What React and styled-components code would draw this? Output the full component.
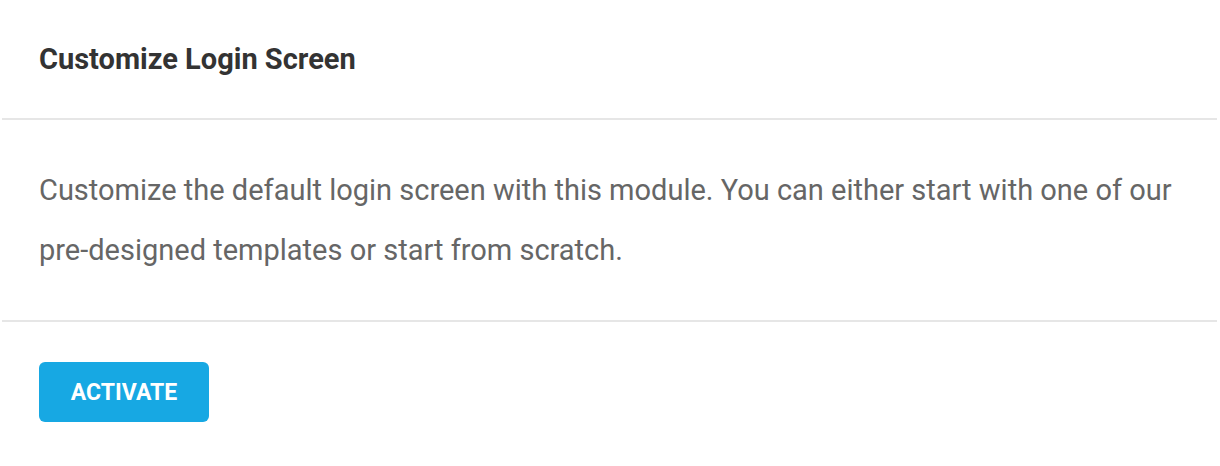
import React from "react";
import styled, { createGlobalStyle } from "styled-components";

const GlobalStyle = createGlobalStyle`
  body {
    margin: 0;
    background: #fff;
    font-family: Roboto, "Liberation Sans", sans-serif;
  }
`;

const ModuleCard = () => {
  return (
    <StyledCard>
      <section className="header">
        <h2>Customize Login Screen</h2>
      </section>
      <section className="body">
        <p>
          Customize the default login screen with this module. You can either
          start with one of our pre-designed templates or start from scratch.
        </p>
      </section>
      <section className="footer">
        <button className="blue-btn">ACTIVATE</button>
      </section>
    </StyledCard>
  );
};

const StyledCard = styled.div`
  margin: 0 3px 0 2px;
  background: #fff;

  section {
    padding: 0 37px;
  }
  .header {
    height: 118px;
    display: flex;
    align-items: center;
    border-bottom: 2px solid #e6e6e6;
  }
  h2 {
    margin: 0;
    font-size: 29px;
    line-height: 36px;
    font-weight: 700;
    color: #333333;
  }
  .body {
    padding-top: 40px;
    padding-bottom: 40px;
    border-bottom: 2px solid #e6e6e6;
  }
  p {
    margin: 0;
    max-width: 1150px;
    font-size: 29px;
    line-height: 60px;
    color: #666666;
  }
  .footer {
    padding-top: 40px;
    padding-bottom: 44px;
  }
  .blue-btn {
    display: block;
    width: 170px;
    height: 60px;
    border: none;
    border-radius: 6px;
    background: #17a8e3;
    color: #fff;
    font-family: Roboto, "Liberation Sans", sans-serif;
    font-size: 23px;
    font-weight: 700;
    cursor: pointer;
  }
`;

export default function App() {
  return (
    <>
      <GlobalStyle />
      <ModuleCard />
    </>
  );
}
